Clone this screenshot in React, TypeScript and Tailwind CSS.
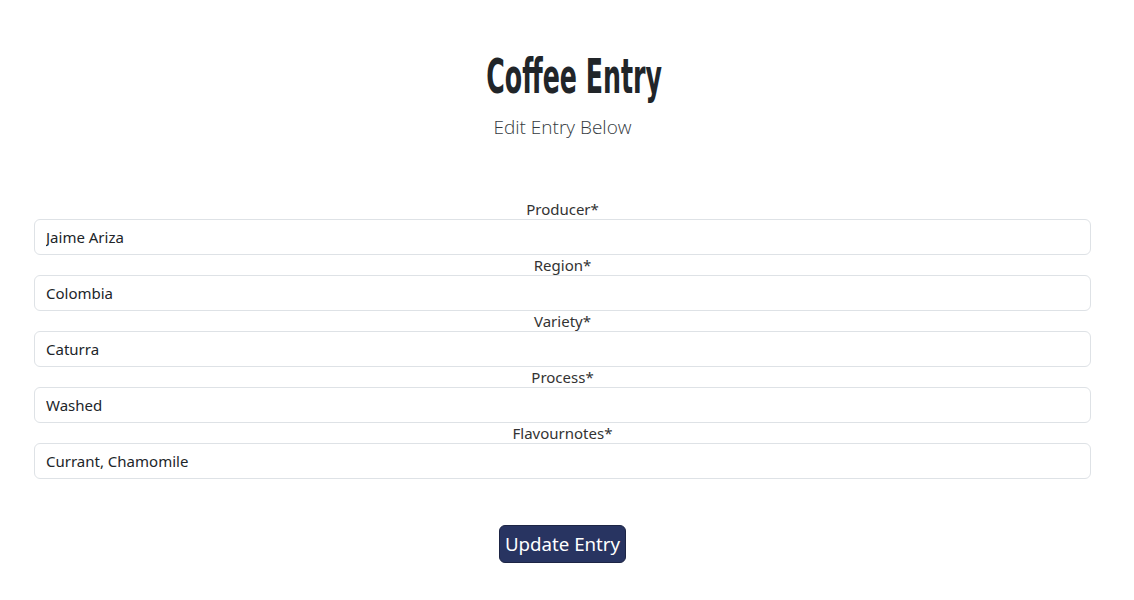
import React from "react";

const fields = [
  { label: "Producer*", value: "Jaime Ariza" },
  { label: "Region*", value: "Colombia" },
  { label: "Variety*", value: "Caturra" },
  { label: "Process*", value: "Washed" },
  { label: "Flavournotes*", value: "Currant, Chamomile" },
];

export default function App() {
  return (
    <div className="min-h-[600px] bg-white text-[#212529]" style={{ fontFamily: '"Noto Sans", sans-serif' }}>
      <div className="flex flex-col items-center pt-[50px] pr-[9px]">
        <h1
          className="text-[48px] font-bold leading-[52px] text-[#212529] ml-[23px] [font-stretch:condensed] scale-x-[0.585]"
          style={{ fontFamily: '"DejaVu Sans Condensed", "DejaVu Sans", sans-serif' }}
        >
          Coffee Entry
        </h1>
        <p
          className="mt-[12px] text-[19px] font-light text-[#343a40] leading-[26px]"
          style={{ fontFamily: '"Open Sans", sans-serif' }}
        >
          Edit Entry Below
        </p>
      </div>
      <form className="mt-[59px] pl-[34px] pr-[43px] flex flex-col">
        {fields.map((f) => (
          <div key={f.label} className="flex flex-col items-center">
            <label className="text-[15px] leading-[20px] text-[#333]">{f.label}</label>
            <input
              readOnly
              value={f.value}
              className="w-full h-[36px] rounded-[6px] border border-[#dee2e6] px-[11px] text-[15px] text-[#212529] outline-none"
              style={{ fontFamily: '"Noto Sans", sans-serif' }}
            />
          </div>
        ))}
        <div className="flex justify-center mt-[46px]">
          <button
            type="button"
            className="h-[38px] px-[5px] rounded-[6px] bg-[#283461] text-white text-[18.7px] leading-[26px] border border-[#1d2545]"
          >
            Update Entry
          </button>
        </div>
      </form>
    </div>
  );
}
